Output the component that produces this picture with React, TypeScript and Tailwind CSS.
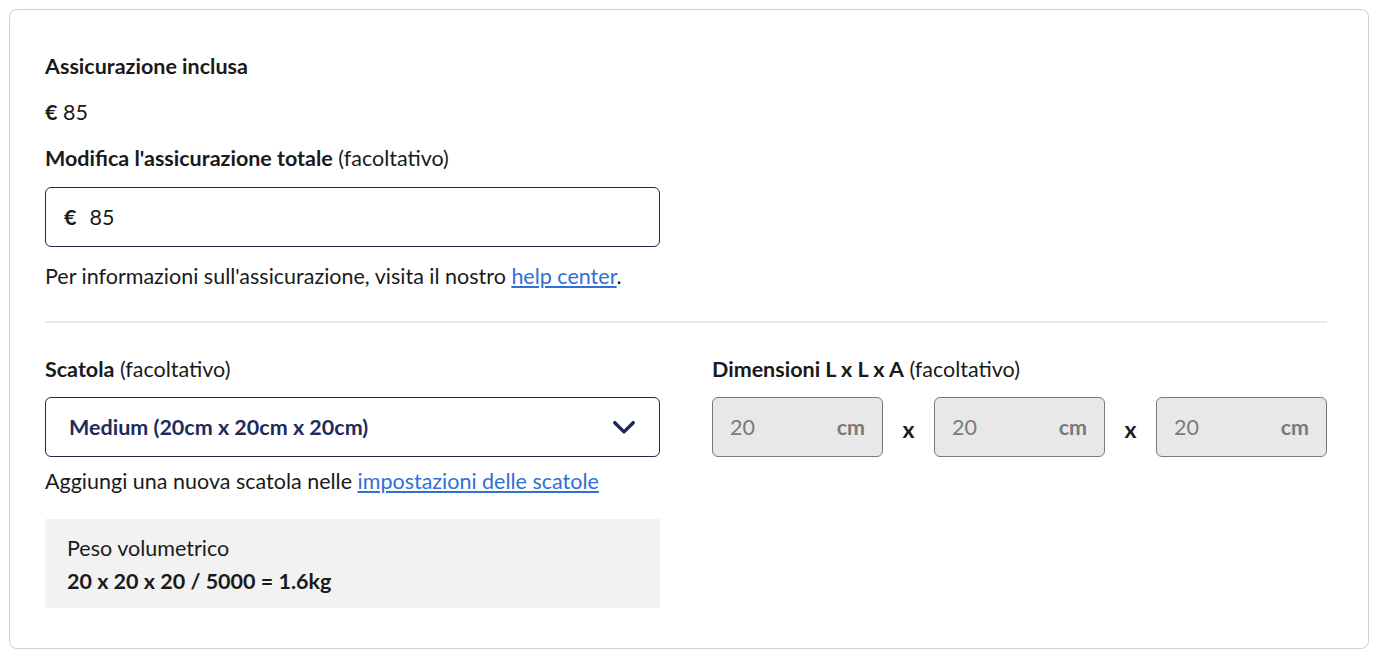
import React from 'react';

const font = {
  fontFamily: 'Lato, "Liberation Sans", Arial, sans-serif',
};

const DimBox = ({ value }: { value: string }) => {
  return (
    <div className="flex-1 h-[60px] flex items-center justify-between px-[17px] bg-[#e8e8e8] border border-[#7a7a7a] rounded-[6px]">
      <span className="text-[#7a7a7a]">{value}</span>
      <span className="font-bold text-[#7a7a7a]">cm</span>
    </div>
  );
};

const Times = () => (
  <div className="w-[51px] flex items-center justify-center pt-[4px] text-[23px] font-bold text-[#1a1a1a]">x</div>
);

const App = () => {
  return (
    <div className="w-[1382px] h-[662px] bg-white pt-[9px] pl-[9px]" style={font}>
      {/* Card */}
      <div className="w-[1360px] h-[640px] border border-[#cfcfcf] rounded-[8px] pl-[35px] pr-[41px] pt-[44px] text-[#1a1a1a] text-[21.5px] leading-[24px]">
        <div className="w-[615px]">
          <div className="font-bold">Assicurazione inclusa</div>
          <div className="mt-[22px]">
            <span className="font-bold">€</span> 85
          </div>
          <div className="mt-[22px]">
            <span className="font-bold">Modifica l'assicurazione totale</span> (facoltativo)
          </div>
          <div className="mt-[17px] h-[60px] border-[1.5px] border-[#1f2a5c] rounded-[6px] flex items-center pl-[18px]">
            <span className="font-bold">€</span>
            <span className="ml-[13px]">85</span>
          </div>
          <div className="mt-[17px] whitespace-nowrap">
            Per informazioni sull'assicurazione, visita il nostro{' '}
            <a href="#" className="text-[#2f6fd6] underline">help center</a>.
          </div>
        </div>

        <div className="mt-[33px] h-[2px] bg-[#ebebeb]" />

        <div className="mt-[34px] grid grid-cols-2 gap-[52px]">
          {/* Left column */}
          <div>
            <div>
              <span className="font-bold">Scatola</span> (facoltativo)
            </div>
            <div className="mt-[16px] h-[60px] border-[1.5px] border-[#1f2a5c] rounded-[6px] flex items-center justify-between pl-[23px] pr-[22px]">
              <span className="font-bold text-[#1f2a5c]">Medium (20cm x 20cm x 20cm)</span>
              <svg width="26" height="26" viewBox="0 0 24 24" fill="none" stroke="#1f2a5c" strokeWidth="3.2" strokeLinecap="round" strokeLinejoin="round">
                <path d="M3.5 8l8.5 8.5 8.5-8.5" />
              </svg>
            </div>
            <div className="mt-[12px] whitespace-nowrap">
              Aggiungi una nuova scatola nelle{' '}
              <a href="#" className="text-[#2f6fd6] underline">impostazioni delle scatole</a>
            </div>
            <div className="mt-[26px] h-[89px] bg-[#f2f2f2] px-[22px] pt-[17px]">
              <div>Peso volumetrico</div>
              <div className="mt-[9px] font-bold">20 x 20 x 20 / 5000 = 1.6kg</div>
            </div>
          </div>

          {/* Right column */}
          <div>
            <div className="whitespace-nowrap">
              <span className="font-bold">Dimensioni L x L x A</span> (facoltativo)
            </div>
            <div className="mt-[16px] flex">
              <DimBox value="20" />
              <Times />
              <DimBox value="20" />
              <Times />
              <DimBox value="20" />
            </div>
          </div>
        </div>
      </div>
    </div>
  );
};

export default App;
